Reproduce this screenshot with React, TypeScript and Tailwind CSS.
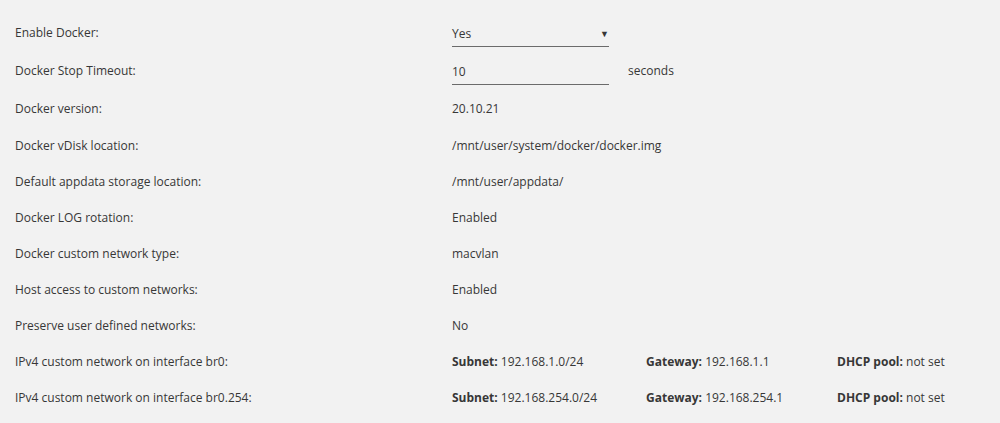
function Net({ subnet, gateway }: { subnet: string; gateway: string }) {
  return (
    <div className="flex">
      <span className="w-[194px]">
        <b className="font-bold">Subnet:</b> {subnet}
      </span>
      <span className="w-[191px]">
        <b className="font-bold">Gateway:</b> {gateway}
      </span>
      <span>
        <b className="font-bold">DHCP pool:</b> not set
      </span>
    </div>
  );
}

export default function App() {
  const list: { label: string; value: React.ReactNode; tall?: boolean }[] = [
    {
      label: 'Enable Docker:',
      tall: true,
      value: (
        <div className="w-[157px] h-[26px] mt-[2px] flex items-center justify-between border-b-[1.5px] border-[#6b6b6b]">
          <span>Yes</span>
          <span className="text-[9px]">▼</span>
        </div>
      ),
    },
    {
      label: 'Docker Stop Timeout:',
      tall: true,
      value: (
        <div className="flex items-center">
          <div className="w-[157px] h-[26px] mt-[2px] flex items-center border-b-[1.5px] border-[#6b6b6b]">
            10
          </div>
          <span className="ml-[19px]">seconds</span>
        </div>
      ),
    },
    { label: 'Docker version:', value: '20.10.21', tall: true },
    { label: 'Docker vDisk location:', value: '/mnt/user/system/docker/docker.img' },
    { label: 'Default appdata storage location:', value: '/mnt/user/appdata/' },
    { label: 'Docker LOG rotation:', value: 'Enabled' },
    { label: 'Docker custom network type:', value: 'macvlan' },
    { label: 'Host access to custom networks:', value: 'Enabled' },
    { label: 'Preserve user defined networks:', value: 'No' },
    {
      label: 'IPv4 custom network on interface br0:',
      value: <Net subnet="192.168.1.0/24" gateway="192.168.1.1" />,
    },
    {
      label: 'IPv4 custom network on interface br0.254:',
      value: <Net subnet="192.168.254.0/24" gateway="192.168.254.1" />,
    },
  ];

  return (
    <main
      className="w-[1000px] h-[423px] bg-[#f2f2f2] text-[#373737] text-[12px] pt-[14px] pl-[15px]"
      style={{ fontFamily: '"Open Sans", sans-serif' }}
    >
      {list.map((r) => (
        <div key={r.label} className={`flex items-center ${r.tall ? 'h-[38px]' : 'h-[36px]'}`}>
          <div className="w-[437px]">{r.label}</div>
          <div>{r.value}</div>
        </div>
      ))}
    </main>
  );
}
